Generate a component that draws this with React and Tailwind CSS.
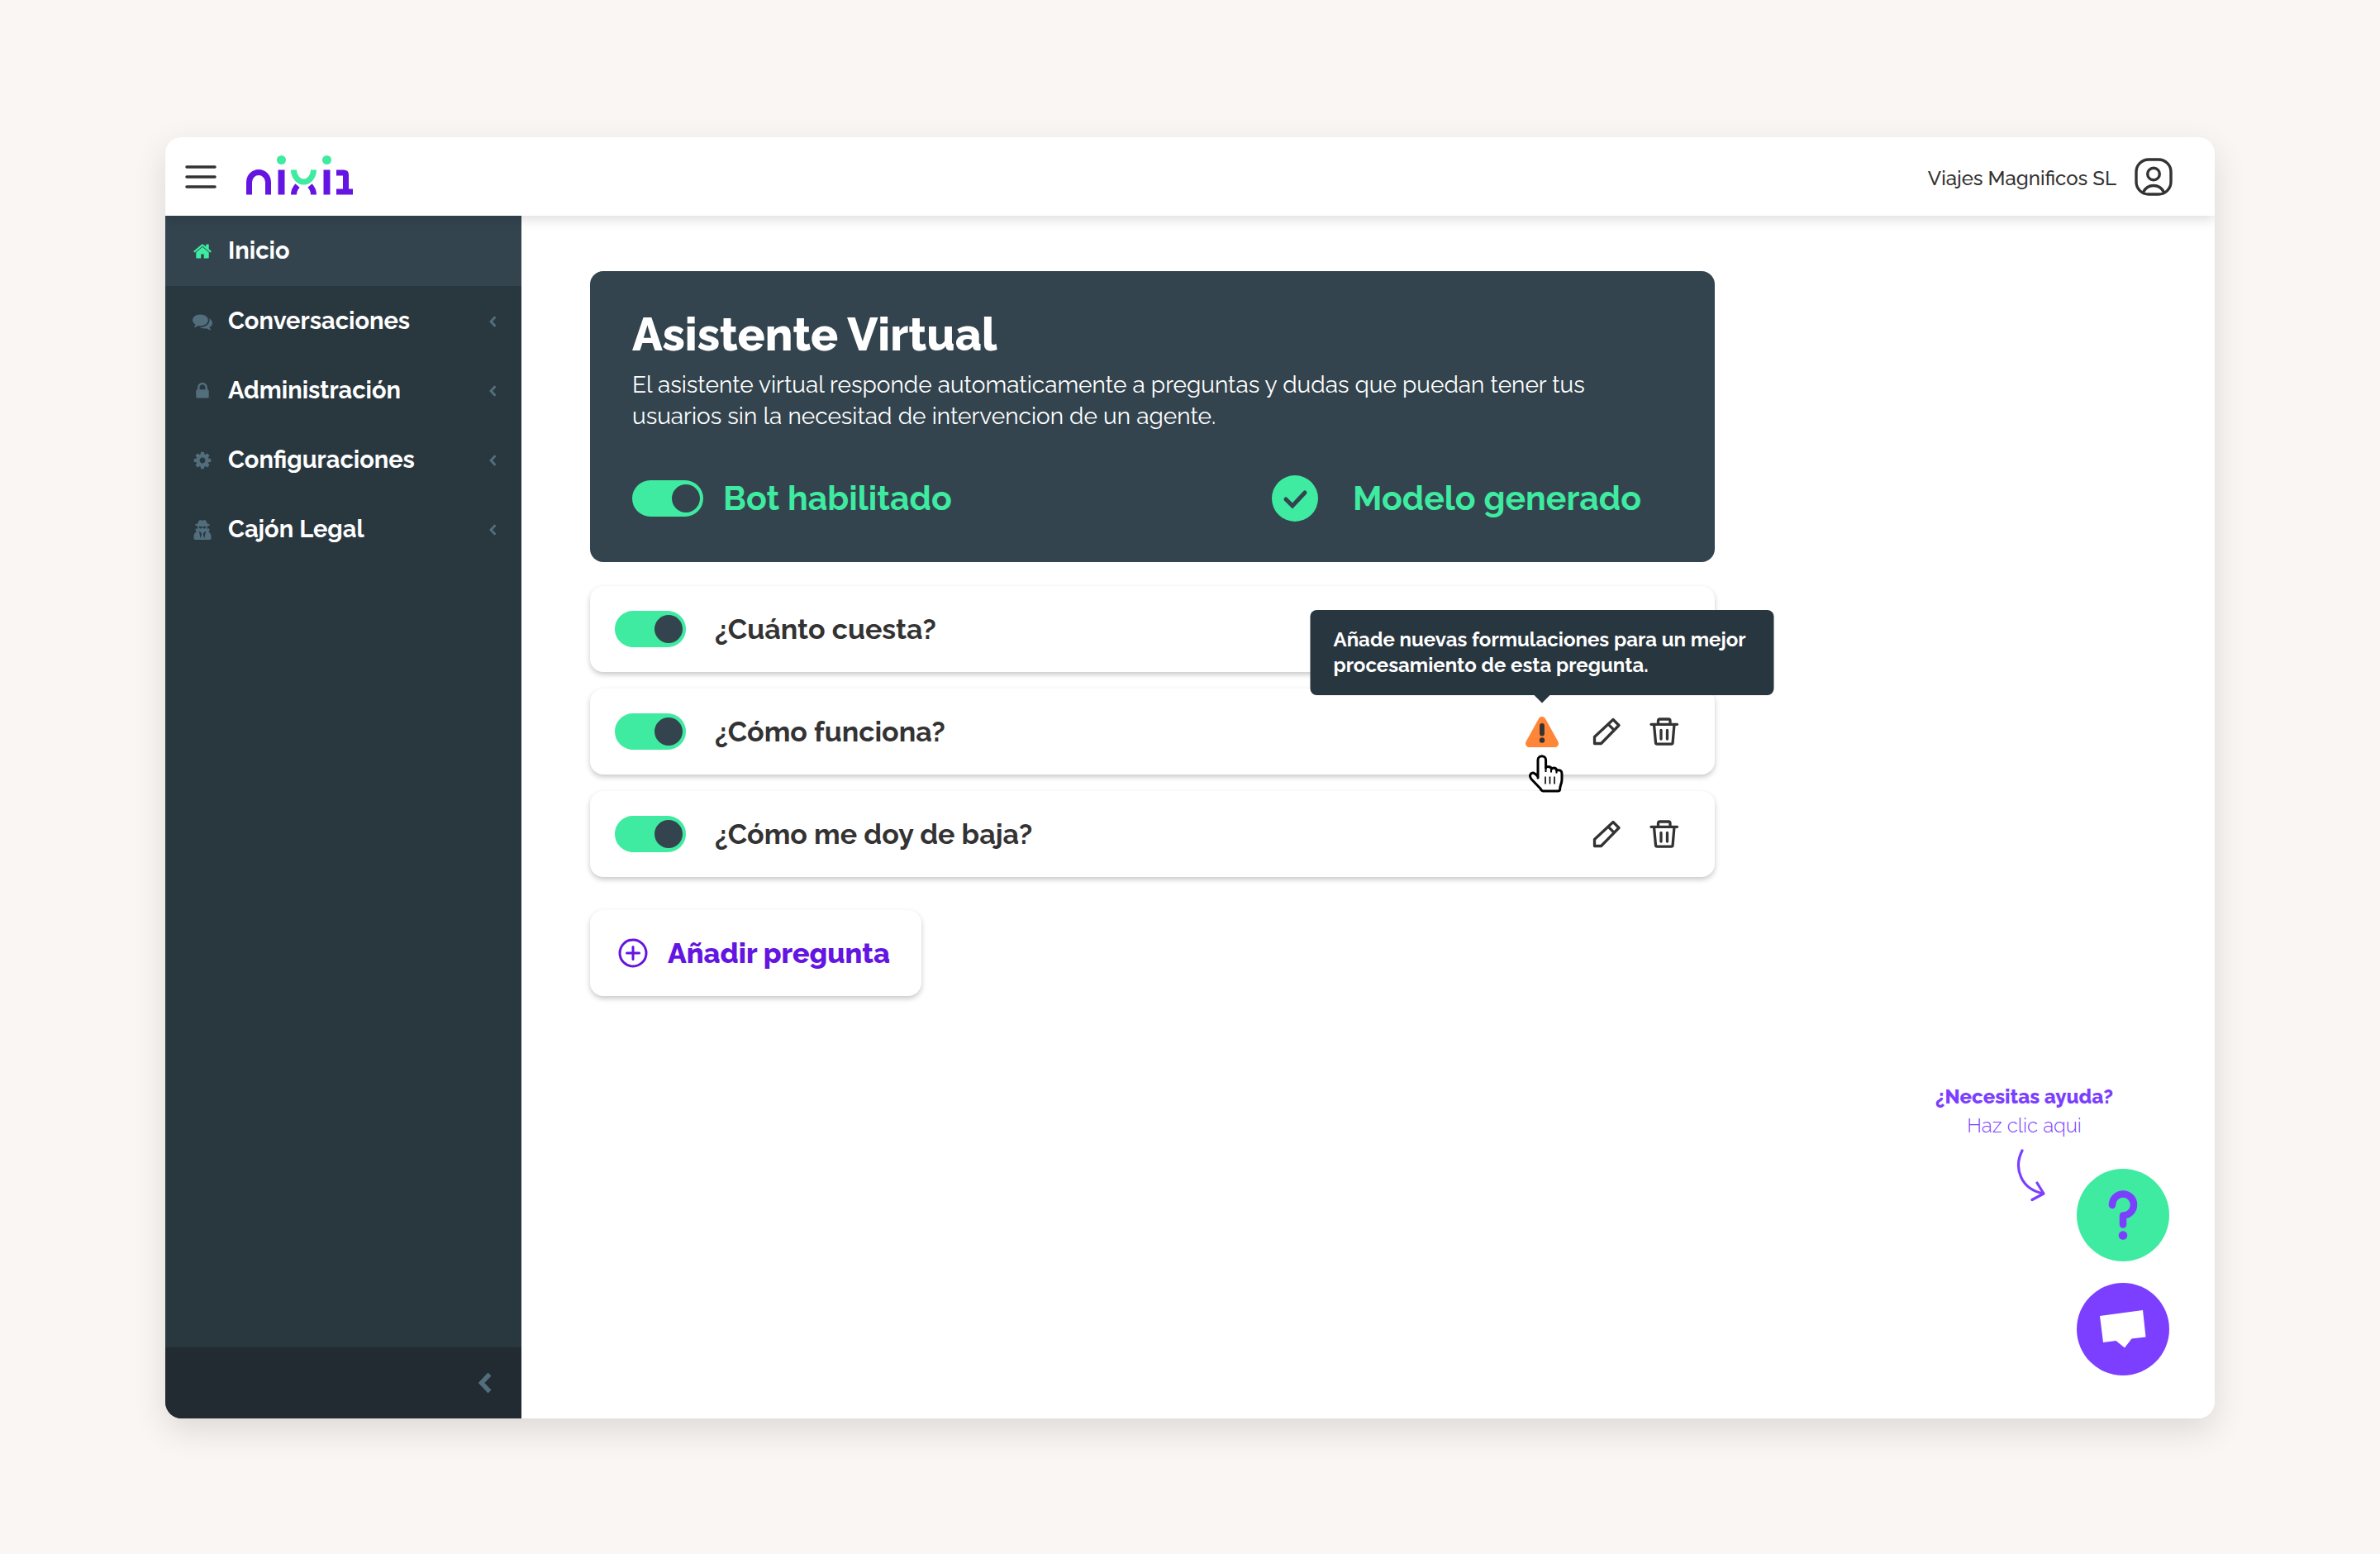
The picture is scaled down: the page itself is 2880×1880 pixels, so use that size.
import React, { useState } from 'react';
import { FaUserSecret } from 'react-icons/fa';

// FontAwesome 4 shapes used by the sidebar
const HOME_PATH =
  'M1472 992v480q0 26-19 45t-45 19h-384v-384h-256v384h-384q-26 0-45-19t-19-45v-480q0-1 .5-3t.5-3l575-474 575 474q1 2 1 6zm223-69l-62 74q-8 9-21 11h-3q-13 0-21-7l-692-577-692 577q-12 8-24 7-13-2-21-11l-62-74q-8-10-7-23.500t11-21.500l719-599q32-26 76-26t76 26l244 204v-195q0-14 9-23t23-9h192q14 0 23 9t9 23v408l219 182q10 8 11 21.500t-7 23.500z';
const COMMENTS_PATH =
  'M1408 768q0 139-94 257t-256.500 186.500-353.500 68.500q-86 0-176-16-124 88-278 128-36 9-86 16h-3q-11 0-20.500-8t-11.500-21q-1-3-1-6.500t.5-6.500 2-6l2.500-5 3.500-5.500 4-5 4.500-5 4-4.500q5-6 23-25t26-29.500 22.500-29 25-38.500 20.500-44q-124-72-195-177t-71-224q0-139 94-257t256.500-186.500 353.500-68.500 353.500 68.500 256.500 186.500 94 257zm384 256q0 120-71 224.500t-195 176.500q10 24 20.500 44t25 38.500 22.500 29 26 29.500 23 25q1 1 4 4.500t4.500 5 4 5 3.500 5.500l2.500 5 2 6 .5 6.500-1 6.500q-3 14-13 22t-22 7q-50-7-86-16-154-40-278-128-90 16-176 16-271 0-472-132 58 4 88 4 161 0 309-45t264-129q125-92 192-212t67-254q0-77-23-152 129 71 204 178t75 230z';
const LOCK_PATH =
  'M640 768h512v-192q0-106-75-181t-181-75-181 75-75 181v192zm832 96v576q0 40-28 68t-68 28h-960q-40 0-68-28t-28-68v-576q0-40 28-68t68-28h32v-192q0-184 132-316t316-132 316 132 132 316v192h32q40 0 68 28t28 68z';
const COG_PATH =
  'M1152 896q0-106-75-181t-181-75-181 75-75 181 75 181 181 75 181-75 75-181zm512-109v222q0 12-8 23t-20 13l-185 28q-19 54-39 91 35 50 107 138 10 12 10 25t-9 23q-27 37-99 108t-94 71q-12 0-26-9l-138-108q-44 23-91 38-16 136-29 186-7 28-36 28h-222q-14 0-24.500-8.500t-11.500-21.500l-28-184q-49-16-90-37l-141 107q-10 9-25 9-14 0-25-11-126-114-165-168-7-10-7-23 0-12 8-23 15-21 51-66.500t54-70.500q-27-50-41-99l-183-27q-13-2-21-12.500t-8-23.500v-222q0-12 8-23t19-13l186-28q14-46 39-92-40-57-107-138-10-12-10-24 0-10 9-23 26-36 98.500-107.500t94.500-71.500q13 0 26 10l138 107q44-23 91-38 16-136 29-186 7-28 36-28h222q14 0 24.500 8.500t11.500 21.500l28 184q49 16 90 37l142-107q9-9 24-9 13 0 25 10 129 119 165 170 7 8 7 22 0 12-8 23-15 21-51 66.500t-54 70.500q26 50 41 98l183 28q13 2 21 12.500t8 23.500z';

const FaIcon = ({ path, className }) => (
  <svg viewBox="0 0 1792 1792" fill="currentColor" className={className} aria-hidden="true">
    <path d={path} />
  </svg>
);

const NAV_ITEMS = [
  { label: 'Inicio', icon: <FaIcon path={HOME_PATH} className="size-6" />, active: true },
  { label: 'Conversaciones', icon: <FaIcon path={COMMENTS_PATH} className="size-6" /> },
  { label: 'Administración', icon: <FaIcon path={LOCK_PATH} className="size-6" /> },
  { label: 'Configuraciones', icon: <FaIcon path={COG_PATH} className="size-6" /> },
  { label: 'Cajón Legal', icon: <FaUserSecret className="size-6" /> },
];

const QUESTIONS = [
  { id: 'cuesta', text: '¿Cuánto cuesta?', covered: true },
  {
    id: 'funciona',
    text: '¿Cómo funciona?',
    warning: 'Añade nuevas formulaciones para un mejor procesamiento de esta pregunta.',
  },
  { id: 'baja', text: '¿Cómo me doy de baja?' },
];

// Logo
function Logo() {
  return (
    <svg viewBox="0 0 129 48" className="mb-1 h-12 w-[129px]" fill="none" aria-hidden="true">
      <g stroke="#6415e1" strokeWidth="7">
        <path d="M3.500 47.500V32.500a11.500 12 0 0 1 23 0V47.500" />
        <path d="M42.500 17.500v30M97.500 17.500v30" strokeWidth="8" />
        <path d="M57.500 47.500q0-6 4.500-11M81.500 47.500q0-6-4.500-11" />
        <path d="M109 21h9q2.500 0 2.500 2.500V44M109 44h20" />
      </g>
      <path d="M57.500 17.500a12 14.500 0 0 0 24 0" stroke="#3eeba0" strokeWidth="7" />
      <circle cx="42.500" cy="5.500" r="5.500" fill="#3eeba0" />
      <circle cx="97.500" cy="5.500" r="5.500" fill="#3eeba0" />
    </svg>
  );
}

// Switch
function Toggle({ label }) {
  const [on, setOn] = useState(true);
  return (
    <label className="relative block h-11 w-[86px] shrink-0 cursor-pointer">
      <input
        type="checkbox"
        role="switch"
        aria-label={label}
        checked={on}
        onChange={(e) => setOn(e.target.checked)}
        className="peer block h-full w-full cursor-pointer appearance-none rounded-full bg-[#6b7f89] checked:bg-[#3eeba0]"
      />
      <span className="pointer-events-none absolute top-[5px] left-[5px] size-[34px] rounded-full bg-[#33444e] peer-checked:left-12" />
    </label>
  );
}

const Chevron = ({ className }) => (
  <svg viewBox="0 0 16 26" fill="none" stroke="#526e7c" strokeWidth="5.500" className={className} aria-hidden="true">
    <path d="M13.500 2.500 3.500 13l10 10.500" />
  </svg>
);

const PencilIcon = () => (
  <svg viewBox="0 0 36 36" fill="none" stroke="#333" strokeWidth="3.300" strokeLinejoin="round" className="size-9" aria-hidden="true">
    <path d="M3.500 32.500V24.500L26 3.500l7 7L11.500 32.500zM20.300 9.300l6.500 6.500" />
  </svg>
);

const TrashIcon = () => (
  <svg viewBox="0 0 36 36" fill="none" stroke="#333" strokeWidth="3.300" strokeLinecap="round" strokeLinejoin="round" className="size-9" aria-hidden="true">
    <path d="M2 9.300h31.500M5.500 9.300 7.500 31.500q.1 1.700 1.800 1.700h17q1.700 0 1.800-1.700L30 9.300M10.500 9V5q0-2 2-2h10.500q2 0 2 2v4M14 16.500v10.500M21.500 16.500v10.500" />
  </svg>
);

const WarningIcon = () => (
  <svg viewBox="0 0 40 37" className="h-[37px] w-10" aria-hidden="true">
    <path d="M20 4.500 4.500 32.500h31z" fill="#ff8539" stroke="#ff8539" strokeWidth="9" strokeLinejoin="round" />
    <path d="M20 11v9.500" stroke="#333" strokeWidth="5.800" strokeLinecap="round" />
    <circle cx="20" cy="28.500" r="3.200" fill="#333" />
  </svg>
);

const HandCursor = () => (
  <svg viewBox="0 0 42 46" fill="#fff" stroke="#000" strokeWidth="3" strokeLinejoin="round" className="h-[46px] w-[42px]" aria-hidden="true">
    <path d="M11 28V6.500a4.800 4.800 0 0 1 9.600 0V16q0-1.500 2.500-1.500 4.400 0 4.400 3 .5-1.500 2.500-1.500 3.600 0 3.600 3 6.400-1.500 6.400 4v7q0 3-1.500 7-.8 2.500-.8 4.500 0 2.500-2.500 2.500H17.500q-2 0-3.500-3L3 29.500Q.5 26 2.200 23.500 5.500 19.500 11 26.500z" />
    <path d="M20.500 15v6M27 17v4.500M33.500 18.500v4" strokeWidth="2" />
    <path d="M20 26.500v9M25.500 26.500v9M31 26.500v9" strokeWidth="1.600" />
  </svg>
);

function Tooltip({ children }) {
  return (
    <div
      role="tooltip"
      className="absolute bottom-[63px] left-1/2 z-20 w-[561px] -translate-x-1/2 rounded-lg bg-[#28363f] px-7 pt-5 pb-[21px] text-2xl leading-[31px] font-bold text-white"
    >
      {children}
      <span className="absolute top-full left-1/2 h-[10px] w-5 -translate-x-1/2 bg-[#28363f] [clip-path:polygon(0_0,100%_0,50%_100%)]" />
    </div>
  );
}

function QuestionRow({ item }) {
  return (
    <li className="flex h-[104px] items-center rounded-2xl bg-white pr-[43px] pl-[30px] shadow-[0_3px_6px_rgba(0,0,0,0.22)]">
      <Toggle label={item.text} />
      <span className="ml-[35px] flex-1 text-[34px] font-bold text-[#333]">{item.text}</span>
      {!item.covered && (
        <div className="flex items-center">
          {item.warning && (
            <div className="relative mr-10">
              <button type="button" aria-label="Aviso" className="block">
                <WarningIcon />
              </button>
              <Tooltip>{item.warning}</Tooltip>
              <span className="absolute top-[46px] left-1 z-20">
                <HandCursor />
              </span>
            </div>
          )}
          <button type="button" aria-label="Editar" className="mr-[34px]">
            <PencilIcon />
          </button>
          <button type="button" aria-label="Eliminar">
            <TrashIcon />
          </button>
        </div>
      )}
    </li>
  );
}

export default function App() {
  return (
    <div className="flex min-h-screen flex-col bg-[#faf6f3] px-[200px] pt-[166px] pb-[164px] font-['Raleway','Lato',sans-serif]">
      <div className="flex flex-1 flex-col overflow-hidden rounded-[20px] bg-white shadow-[0_14px_40px_rgba(0,0,0,0.12)]">
        {/* Header */}
        <header className="relative z-10 flex h-[95px] items-center bg-white pr-[51px] pl-6 shadow-[0_4px_14px_rgba(0,0,0,0.14)]">
          <button type="button" aria-label="Menú" className="mr-9">
            <svg viewBox="0 0 38 28" stroke="#333" strokeWidth="3.500" strokeLinecap="round" className="h-7 w-[38px]" aria-hidden="true">
              <path d="M2 2h34M2 14h34M2 26h34" />
            </svg>
          </button>
          <a href="#" aria-label="nixi1">
            <Logo />
          </a>
          <span className="mt-1 ml-auto text-2xl font-medium text-[#333]">Viajes Magnificos SL</span>
          <button type="button" aria-label="Perfil" className="ml-[22px]">
            <svg viewBox="0 0 46 46" fill="none" stroke="#333" strokeWidth="3.400" className="size-[46px]" aria-hidden="true">
              <rect x="2" y="2" width="42" height="42" rx="15" />
              <circle cx="23" cy="19.500" r="7.300" />
              <path d="M10.500 41.500q4-8 12.500-8t12.500 8" />
            </svg>
          </button>
        </header>

        <div className="flex flex-1">
          {/* Sidebar */}
          <aside className="flex w-[431px] flex-col bg-[#29373f]">
            <nav className="flex flex-col">
              {NAV_ITEMS.map((item) => (
                <a
                  key={item.label}
                  href="#"
                  className={
                    item.active
                      ? 'flex h-[85px] items-center bg-[#33444e] pt-px pr-[30px] pl-[33px] text-[#3eeba0]'
                      : 'flex h-[84px] items-center pt-[2px] pr-[30px] pl-[33px] text-[#526e7c]'
                  }
                >
                  {item.icon}
                  <span className="ml-[19px] flex-1 text-[29px] font-bold text-white">{item.label}</span>
                  {!item.active && <Chevron className="h-[14px] w-[9px]" />}
                </a>
              ))}
            </nav>
            <div className="mt-auto flex h-[86px] items-center justify-end bg-[#212b31] pr-9">
              <button type="button" aria-label="Contraer menú">
                <Chevron className="h-[26px] w-4" />
              </button>
            </div>
          </aside>

          <main className="flex flex-1 flex-col pt-[67px] pr-[55px] pb-[52px] pl-[83px]">
            {/* Assistant card */}
            <section className="max-w-[1361px] rounded-2xl bg-[#33444e] px-[51px] pt-[45px] pb-[46px]">
              <h1 className="text-[55px] leading-16 font-extrabold text-white">Asistente Virtual</h1>
              <p className="mt-[10px] max-w-[1180px] text-[28px] leading-[38px] text-white">
                El asistente virtual responde automaticamente a preguntas y dudas que puedan tener tus
                usuarios sin la necesitad de intervencion de un agente.
              </p>
              <div className="mt-12 flex h-[63px] items-center justify-between pr-[38px] text-[41px] font-bold text-[#3eeba0]">
                <div className="flex items-center gap-6">
                  <Toggle label="Bot habilitado" />
                  <span>Bot habilitado</span>
                </div>
                <div className="flex items-center gap-[42px]">
                  <svg viewBox="0 0 56 56" className="size-14" aria-hidden="true">
                    <circle cx="28" cy="28" r="28" fill="#3eeba0" />
                    <path d="m17 29 8 8 15-16" fill="none" stroke="#33444e" strokeWidth="5" strokeLinecap="round" />
                  </svg>
                  <span>Modelo generado</span>
                </div>
              </div>
            </section>

            {/* Questions */}
            <ul className="mt-[29px] flex max-w-[1361px] flex-col gap-5">
              {QUESTIONS.map((item) => (
                <QuestionRow key={item.id} item={item} />
              ))}
            </ul>

            <button
              type="button"
              className="mt-10 flex h-[104px] items-center gap-6 self-start rounded-2xl bg-white pr-[38px] pl-[34px] text-[34px] font-extrabold text-[#6415e1] shadow-[0_3px_6px_rgba(0,0,0,0.22)]"
            >
              <svg viewBox="0 0 36 36" fill="none" stroke="currentColor" strokeWidth="3" strokeLinecap="round" className="size-9" aria-hidden="true">
                <circle cx="18" cy="18" r="16" />
                <path d="M18 10.500v15M10.500 18h15" />
              </svg>
              Añadir pregunta
            </button>

            {/* Help */}
            <div className="mt-auto flex flex-col items-end">
              <div className="mr-[68px] mb-[11px] flex flex-col items-center text-2xl leading-[35px] text-[#7c3fff]">
                <span className="font-extrabold">¿Necesitas ayuda?</span>
                <span className="font-light">Haz clic aqui</span>
              </div>
              <div className="flex items-start">
                <svg viewBox="0 0 36 64" fill="none" stroke="#7c3fff" strokeWidth="3.200" strokeLinecap="round" strokeLinejoin="round" className="mr-[37px] h-16 w-9" aria-hidden="true">
                  <path d="M7 2C-4 24 6 49 33 54M25 41l8 13-14 7.500" />
                </svg>
                <button type="button" aria-label="Ayuda" className="mt-6 flex size-28 items-center justify-center rounded-full bg-[#3eeba0]">
                  <svg viewBox="0 0 36 60" fill="none" stroke="#7c3fff" strokeWidth="8.500" strokeLinecap="round" strokeLinejoin="round" className="h-[60px] w-9" aria-hidden="true">
                    <path d="M5 18a13 13 0 1 1 13 12.500v11" />
                    <circle cx="18" cy="54.500" r="5.300" fill="#7c3fff" stroke="none" />
                  </svg>
                </button>
              </div>
              <button type="button" aria-label="Chat" className="mt-[26px] flex size-28 items-center justify-center rounded-full bg-[#7c3fff]">
                <svg viewBox="0 0 56 46" fill="#fff" className="h-[46px] w-14" aria-hidden="true">
                  <path d="M0 7 52 0l3.500 32.500-17 2L30 45.500 19.500 37 4 39z" />
                </svg>
              </button>
            </div>
          </main>
        </div>
      </div>
    </div>
  );
}
